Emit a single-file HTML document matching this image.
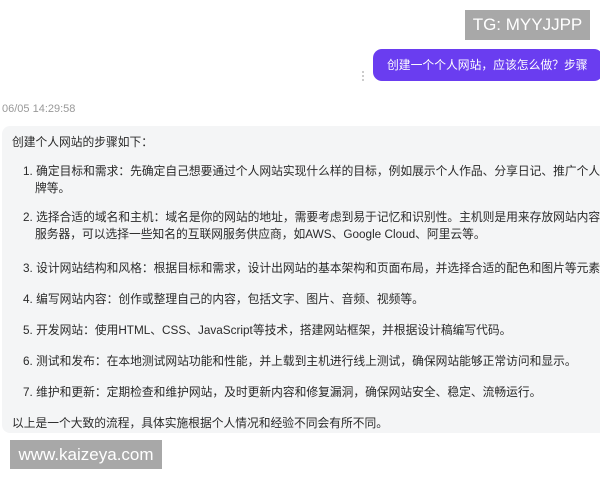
<!DOCTYPE html>
<html><head><meta charset="utf-8"><style>
*{margin:0;padding:0;box-sizing:border-box}
body{width:600px;height:480px;overflow:hidden;background:#fff;font-family:"Liberation Sans","Noto Sans CJK SC",sans-serif;position:relative;color:#333}
.tg{position:absolute;left:465px;top:10px;width:125px;height:30px;background:#a8a8a8;color:#fff;font-size:17px;line-height:30px;text-align:center}
.q{position:absolute;left:373px;top:49px;width:230px;height:32px;background:#6a3df0;border-radius:9px;color:#fff;font-size:11.8px;line-height:32px;padding-left:14px;white-space:nowrap}
.dots{position:absolute;left:362px;top:71px;width:2px;height:10px;border-left:2px dotted #ccc}
.ts{position:absolute;left:2px;top:103px;font-size:11px;color:#999}
.bub{position:absolute;left:2px;top:126px;width:610px;height:307px;background:#f4f5f6;border-radius:8px}
.t{position:absolute;white-space:nowrap;font-size:11.75px;color:#2a2a2a;line-height:14px}
.w{position:absolute;left:10px;top:440px;width:152px;height:29px;background:#a8a8a8;color:#fff;font-size:17px;line-height:29px;text-align:center}
</style></head><body>
<div class="tg">TG: MYYJJPP</div>
<div class="dots"></div>
<div class="q">创建一个个人网站，应该怎么做？步骤</div>
<div class="ts">06/05 14:29:58</div>
<div class="bub"></div>
<div class="t" style="left:12px;top:136px">创建个人网站的步骤如下：</div>
<div class="t" style="left:23px;top:165px">1. 确定目标和需求：先确定自己想要通过个人网站实现什么样的目标，例如展示个人作品、分享日记、推广个人品</div>
<div class="t" style="left:35px;top:182px">牌等。</div>
<div class="t" style="left:23px;top:211px">2. 选择合适的域名和主机：域名是你的网站的地址，需要考虑到易于记忆和识别性。主机则是用来存放网站内容的</div>
<div class="t" style="left:35px;top:228px">服务器，可以选择一些知名的互联网服务供应商，如AWS、Google Cloud、阿里云等。</div>
<div class="t" style="left:23px;top:262px">3. 设计网站结构和风格：根据目标和需求，设计出网站的基本架构和页面布局，并选择合适的配色和图片等元素。</div>
<div class="t" style="left:23px;top:293px">4. 编写网站内容：创作或整理自己的内容，包括文字、图片、音频、视频等。</div>
<div class="t" style="left:23px;top:324px">5. 开发网站：使用HTML、CSS、JavaScript等技术，搭建网站框架，并根据设计稿编写代码。</div>
<div class="t" style="left:23px;top:355px">6. 测试和发布：在本地测试网站功能和性能，并上载到主机进行线上测试，确保网站能够正常访问和显示。</div>
<div class="t" style="left:23px;top:386px">7. 维护和更新：定期检查和维护网站，及时更新内容和修复漏洞，确保网站安全、稳定、流畅运行。</div>
<div class="t" style="left:12px;top:417px">以上是一个大致的流程，具体实施根据个人情况和经验不同会有所不同。</div>
<div class="w">www.kaizeya.com</div>
</body></html>
